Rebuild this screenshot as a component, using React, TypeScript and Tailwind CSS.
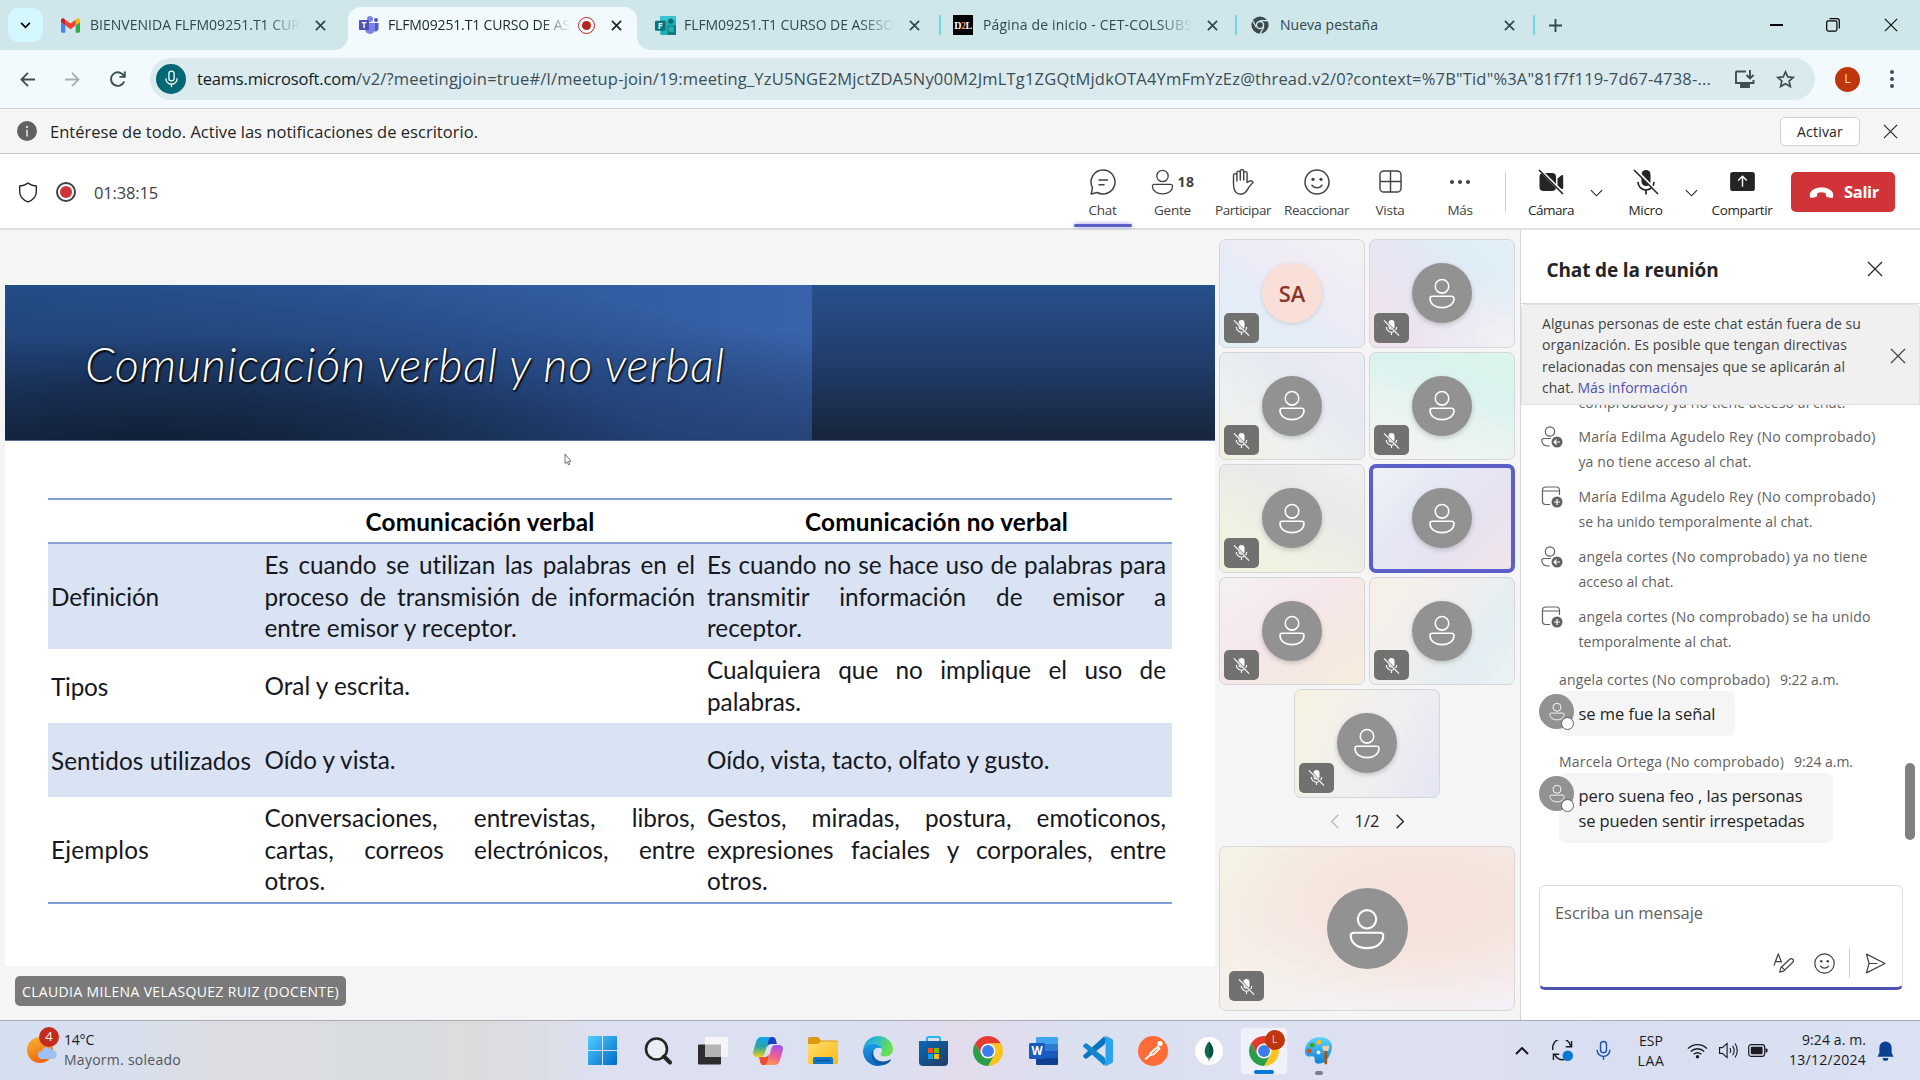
import React, { useLayoutEffect, useRef } from 'react';

/* Text run whose tracking is adjusted so that it fills a known width. */
function Fit({ w, className = '', children }: { w: number; className?: string; children: string }) {
  const ref = useRef<HTMLSpanElement>(null);
  useLayoutEffect(() => {
    const el = ref.current;
    if (!el) return;
    el.style.letterSpacing = '0px';
    const natural = el.getBoundingClientRect().width;
    el.style.letterSpacing = `${(w - natural) / children.length}px`;
  }, [w, children]);
  return (
    <span ref={ref} className={'inline-block w-fit shrink-0 whitespace-pre ' + className}>
      {children}
    </span>
  );
}

type P = { className?: string };

const X = ({ className = '' }: P) => (
  <svg viewBox="0 0 16 16" className={className} fill="none" stroke="currentColor" strokeWidth="1.2">
    <path d="M1 1 15 15M15 1 1 15" />
  </svg>
);

const Person = ({ className = '' }: P) => (
  <svg viewBox="0 0 28 32" className={className} fill="none" stroke="currentColor" strokeWidth="1.6">
    <circle cx="14" cy="8.6" r="7" />
    <path d="M4 18.8h20a2.4 2.4 0 0 1 2.4 2.4c0 5.4-5.2 9.4-12.4 9.4S1.6 26.6 1.6 21.2A2.4 2.4 0 0 1 4 18.8z" />
  </svg>
);

const Chrome = ({ className = '' }: P) => (
  <svg viewBox="0 0 48 48" className={className}>
    <circle cx="24" cy="24" r="12" fill="#fff" />
    <path fill="#e33b2e" d="M24 12h20.780A24 24 0 0 0 3.220 12.003L13.610 30A11.985 11.985 0 0 1 24 12z" />
    <path fill="#fcc31e" d="M34.390 30.003 24 48A24 24 0 0 0 44.780 12H24A11.985 11.985 0 0 1 34.390 30.003z" />
    <path fill="#2a9d48" d="M13.610 30.003 3.220 12.006A24 24 0 0 0 24.003 48L34.390 30.003A11.985 11.985 0 0 1 13.610 30.003z" />
    <circle cx="24" cy="24" r="9.5" fill="#3b7ded" />
  </svg>
);

const ChromeMono = ({ className = '' }: P) => (
  <svg viewBox="0 0 48 48" className={className}>
    <circle cx="24" cy="24" r="23" fill="#3c4a4e" />
    <circle cx="24" cy="24" r="11.5" fill="#cfe7eb" />
    <circle cx="24" cy="24" r="7.5" fill="#3c4a4e" />
    <path d="M24 12.500H45M14 30 4 12M34 30 24 48" stroke="#cfe7eb" strokeWidth="3.5" fill="none" />
  </svg>
);

const Gmail = () => (
  <svg viewBox="52 42 88 66" className="h-[15px] w-[19px]">
    <path fill="#4285f4" d="M58 108h14V74L52 59v43c0 3.320 2.690 6 6 6" />
    <path fill="#34a853" d="M120 108h14c3.320 0 6-2.690 6-6V59l-20 15" />
    <path fill="#fbbc04" d="M120 48v26l20-15v-8c0-7.420-8.470-11.650-14.400-7.200" />
    <path fill="#ea4335" d="M72 74V48l24 18 24-18v26L96 92" />
    <path fill="#c5221f" d="M52 51v8l20 15V48l-5.600-4.200c-5.940-4.450-14.400-.220-14.400 7.200" />
  </svg>
);

const TeamsLogo = () => (
  <svg viewBox="0 0 20 18" className="h-[18px] w-[20px]">
    <circle cx="17" cy="4" r="2" fill="#5059c9" />
    <circle cx="11" cy="3" r="3" fill="#7b83eb" />
    <path fill="#5059c9" d="M14 7h5.500v6a3 3 0 0 1-4.500 2z" />
    <path fill="#7b83eb" d="M6 7h10v6a5 5 0 0 1-10 0z" />
    <rect y="4" width="10" height="10" rx="1" fill="#4b53bc" />
    <text x="5" y="12" textAnchor="middle" fontSize="8.5" fontWeight="700" fontFamily="Open Sans" fill="#fff">T</text>
  </svg>
);

const FormsLogo = () => (
  <svg viewBox="0 0 20 18" className="h-[19px] w-[21px]">
    <rect x="5" width="15" height="18" rx="1" fill="#1fb0b4" />
    <rect x="12" y="9" width="8" height="9" fill="#0b7b80" />
    <rect x="5" width="15" height="4" fill="#37c6d0" />
    <circle cx="15" cy="4.8" r="2.5" fill="#0b6a70" />
    <rect x="13" y="10" width="5" height="5" fill="#2ba9ae" />
    <rect y="4.5" width="10" height="9.5" rx="1" fill="#02767a" />
    <text x="5" y="12.3" textAnchor="middle" fontSize="8.5" fontWeight="700" fontFamily="Open Sans" fill="#fff">F</text>
  </svg>
);

const Mic = ({ className = '' }: P) => (
  <svg viewBox="0 0 20 24" className={className} fill="none" stroke="currentColor" strokeWidth="1.7">
    <rect x="6.5" y="1.5" width="7" height="13" rx="3.5" />
    <path d="M2.500 11v.500a7.500 7.500 0 0 0 15 0V11M10 19v4" />
  </svg>
);

const MicOff = ({ className = '' }: P) => (
  <svg viewBox="0 0 18 18" className={className} fill="none" stroke="currentColor">
    <rect x="5.8" y="1" width="6.4" height="10.5" rx="3.2" fill="currentColor" stroke="none" />
    <path d="M3.500 8.500a5.500 5.500 0 0 0 11 0M9 14v3" strokeWidth="1.2" />
    <path d="m1.400 1.600 15.600 15.600" strokeWidth="2.2" className="stroke-[#767676]" />
    <path d="m1 1.500 16 16" strokeWidth="1.2" />
  </svg>
);

function TabClose({ className = '' }: P) {
  return (
    <svg viewBox="0 0 12 12" className={'size-[11px] shrink-0 ' + className} fill="none" stroke="currentColor" strokeWidth="1.9">
      <path d="M1 1 11 11M11 1 1 11" />
    </svg>
  );
}

function TabTitle({ w, fade = true, children }: { w: number; fade?: boolean; children: string }) {
  return (
    <span
      className={
        'ml-[10px] overflow-hidden text-[14px] leading-5 ' +
        (fade ? '[mask-image:linear-gradient(to_right,#000_84%,transparent)]' : '')
      }
    >
      <Fit w={w}>{children}</Fit>
    </span>
  );
}

function TabStrip() {
  return (
    <div className="flex h-[50px] items-stretch bg-[#cfe7eb] text-[#33484d]">
      <div className="ml-[8px] mt-[8px] flex h-[34px] w-[35px] items-center justify-center rounded-[11px] bg-[#d3f8ff]">
        <svg viewBox="0 0 12 8" className="h-[7px] w-[11px] text-black" fill="none" stroke="currentColor" strokeWidth="2">
          <path d="m1 1 5 5 5-5" />
        </svg>
      </div>
      <div className="flex w-[305px] items-center pl-[18px] pr-[22px]">
        <Gmail />
        <TabTitle w={210}>BIENVENIDA FLFM09251.T1 CUR</TabTitle>
        <TabClose className="ml-auto" />
      </div>
      <div className="relative mt-[7px] flex w-[289px] items-center rounded-t-[13px] bg-[#f3fafd] pb-[7px] pl-[11px] pr-[15px] text-[#15292e]">
        <span className="absolute -left-[13px] bottom-0 size-[13px] bg-[radial-gradient(circle_at_0_0,transparent_12.5px,#f3fafd_13px)]" />
        <span className="absolute -right-[13px] bottom-0 size-[13px] bg-[radial-gradient(circle_at_100%_0,transparent_12.5px,#f3fafd_13px)]" />
        <TeamsLogo />
        <span className="-ml-px flex">
          <TabTitle w={182}>FLFM09251.T1 CURSO DE AS</TabTitle>
        </span>
        <span className="ml-auto flex size-[17px] items-center justify-center rounded-full border-[1.5px] border-[#b3261e]">
          <span className="size-[9px] rounded-full bg-[#b3261e]" />
        </span>
        <TabClose className="ml-[16px]" />
      </div>
      <div className="flex w-[302px] items-center pl-[18px] pr-[19px]">
        <FormsLogo />
        <span className="-ml-[2px] flex">
          <TabTitle w={210}>FLFM09251.T1 CURSO DE ASESO</TabTitle>
        </span>
        <TabClose className="ml-auto" />
      </div>
      <div className="my-auto h-5 w-[2px] rounded bg-[#70d6e6]" />
      <div className="flex w-[294px] items-center pl-[12px] pr-[17px]">
        <span className="flex h-[20px] w-[20px] items-center justify-center bg-black font-[Liberation_Serif] text-[10px] font-bold tracking-[-0.5px] text-white">
          D<span className="text-[#ff8c5a]">2</span>L
        </span>
        <TabTitle w={209}>Página de inicio - CET-COLSUBS</TabTitle>
        <TabClose className="ml-auto" />
      </div>
      <div className="my-auto h-5 w-[2px] rounded bg-[#70d6e6]" />
      <div className="flex w-[296px] items-center pl-[14px] pr-[18px]">
        <ChromeMono className="size-[18px]" />
        <span className="ml-px flex">
          <TabTitle w={98} fade={false}>Nueva pestaña</TabTitle>
        </span>
        <TabClose className="ml-auto" />
      </div>
      <div className="my-auto h-5 w-[2px] rounded bg-[#70d6e6]" />
      <svg viewBox="0 0 14 14" className="my-auto ml-[14px] size-[13px]" fill="none" stroke="currentColor" strokeWidth="2">
        <path d="M7 0v14M0 7h14" />
      </svg>
      <div className="ml-auto flex items-center pr-[22px] text-black">
        <span className="h-[1.5px] w-[13px] bg-black" />
        <svg viewBox="0 0 14 14" className="ml-[43px] size-[14px]" fill="none" stroke="currentColor" strokeWidth="1.2">
          <rect x=".7" y="2.9" width="10.2" height="10.2" rx="1.5" />
          <path d="M3.500.700H11a2.300 2.300 0 0 1 2.300 2.300v7.500" />
        </svg>
        <X className="ml-[44px] size-[14px]" />
      </div>
    </div>
  );
}

function AddressBar() {
  return (
    <div className="flex h-[59px] items-center border-b border-[#c9cfd1] bg-[#f3fafd] text-[#3c4f54]">
      <svg viewBox="0 0 16 16" className="ml-[20px] size-[15px]" fill="none" stroke="currentColor" strokeWidth="1.9">
        <path d="M16 8H2M8.500 1 1.500 8l7 7" />
      </svg>
      <svg viewBox="0 0 16 16" className="ml-[30px] size-[15px] text-[#a5b1b4]" fill="none" stroke="currentColor" strokeWidth="1.9">
        <path d="M0 8h14M7.500 1l7 7-7 7" />
      </svg>
      <svg viewBox="0 0 16 16" className="ml-[30px] size-[16px]" fill="none" stroke="currentColor" strokeWidth="1.9">
        <path d="M14.200 10.500A6.800 6.800 0 1 1 14 5.200M14.800.500v5.400H9.400" />
      </svg>
      <div className="ml-[24px] flex h-[42px] w-[1665px] items-center rounded-full bg-[#dbeaef]">
        <span className="ml-[6px] flex size-[30px] items-center justify-center rounded-full bg-[#006874] text-white">
          <Mic className="h-[18px] w-[15px]" />
        </span>
        <span className="ml-[11px] pt-px text-[16.5px]">
          <Fit w={159} className="text-[#0d1e22]">teams.microsoft.com</Fit>
          <Fit w={1355}>{'/v2/?meetingjoin=true#/l/meetup-join/19:meeting_YzU5NGE2MjctZDA5Ny00M2JmLTg1ZGQtMjdkOTA4YmFmYzEz@thread.v2/0?context=%7B"Tid"%3A"81f7f119-7d67-4738-...'}</Fit>
        </span>
        <svg viewBox="0 0 20 18" className="ml-auto h-[18px] w-[20px]" fill="none" stroke="currentColor" strokeWidth="1.9">
          <path d="M11 1.500H2a1 1 0 0 0-1 1V13h17.500v-3M15 0v8M11.500 5 15 8.500 18.500 5M6 15.800h8" />
          <path d="M6 14h8v3H6z" fill="currentColor" />
        </svg>
        <svg viewBox="0 0 20 20" className="ml-[21px] mr-[20px] size-[19px]" fill="none" stroke="currentColor" strokeWidth="1.8">
          <path d="m10 2 2.400 5.300 5.700.600-4.300 3.800 1.300 5.700L10 14.400l-5.100 3 1.300-5.700L1.900 7.900l5.700-.600z" />
        </svg>
      </div>
      <span className="ml-[20px] flex size-[25px] items-center justify-center rounded-full bg-[#bf360c] text-[12.5px] text-[#f3d5ca]">L</span>
      <div className="ml-[30px] flex flex-col gap-[3px]">
        <i className="size-[4px] rounded-full bg-current" />
        <i className="size-[4px] rounded-full bg-current" />
        <i className="size-[4px] rounded-full bg-current" />
      </div>
    </div>
  );
}

function NotifyBar() {
  return (
    <div className="flex h-[45px] items-center border-b border-[#cdcdcd] bg-[#f5f5f5] text-[#242424]">
      <span className="ml-[17px] flex size-[20px] items-center justify-center rounded-full bg-[#616161]">
        <svg viewBox="0 0 4 12" className="h-[11px] w-[4px]" fill="#fff">
          <circle cx="2" cy="1.2" r="1.1" />
          <rect x="1.3" y="4" width="1.4" height="7.5" />
        </svg>
      </span>
      <Fit w={428} className="ml-[13px] pt-[3px] text-[16.5px]">Entérese de todo. Active las notificaciones de escritorio.</Fit>
      <div className="ml-auto flex h-[29px] w-[80px] items-center justify-center rounded-[5px] border border-[#d1d1d1] bg-white pt-px text-[14px]">
        <Fit w={46}>Activar</Fit>
      </div>
      <X className="ml-[23px] mr-[22px] size-[15px]" />
    </div>
  );
}

function Tool({ className, label, w, children, on = false }: { className: string; label: string; w: number; children: React.ReactNode; on?: boolean }) {
  return (
    <div className={'relative flex h-[75px] flex-col items-center pt-[13px] ' + className}>
      <div className="flex h-[28px] items-center justify-center">{children}</div>
      <Fit w={w} className="mt-[4px] text-[13.5px] leading-5">{label}</Fit>
      {on && <span className="absolute bottom-[3px] h-[3px] w-[58px] rounded-full bg-[#5b5fc7] shadow-[0_0_4px_#8a8de0]" />}
    </div>
  );
}

const Smile = ({ className = '' }: P) => (
  <svg viewBox="0 0 26 26" className={className} fill="none" stroke="currentColor" strokeWidth="1.5">
    <circle cx="13" cy="13" r="12" />
    <path d="M8 16.200a6.200 6.200 0 0 0 10 0" strokeLinecap="round" />
    <circle cx="9" cy="10.3" r="1.6" fill="currentColor" stroke="none" />
    <circle cx="17" cy="10.3" r="1.6" fill="currentColor" stroke="none" />
  </svg>
);

const Chevron = ({ className = '' }: P) => (
  <svg viewBox="0 0 14 8" className={className} fill="none" stroke="currentColor" strokeWidth="1.2">
    <path d="m1 1 6 6 6-6" />
  </svg>
);

function MeetingBar() {
  return (
    <div className="flex h-[76px] items-center border-b-2 border-[#e0e0e0] bg-white pt-[2px] text-[#424242]">
      <svg viewBox="0 0 20 22" className="ml-[18px] h-[21px] w-[20px] text-[#242424]" fill="none" stroke="currentColor" strokeWidth="1.4">
        <path d="M10 1.200C12.500 3 15.500 4 18.700 4.200V10c0 5-3 8.800-8.700 10.800C4.300 18.800 1.300 15 1.300 10V4.200C4.500 4 7.500 3 10 1.200z" />
      </svg>
      <span className="ml-[18px] flex size-[20px] items-center justify-center rounded-full border-2 border-[#424242]">
        <span className="size-[12px] rounded-full bg-[#d13438]" />
      </span>
      <Fit w={64} className="ml-[18px] pt-[2px] text-[16.5px]">01:38:15</Fit>
      <div className="ml-auto flex">
        <Tool className="w-[69px]" label="Chat" w={28} on>
          <svg viewBox="0 0 26 26" className="size-[26px]" fill="none" stroke="currentColor" strokeWidth="1.5" strokeLinecap="round">
            <path d="M13 1a12 12 0 1 1-5.800 22.500L1.200 25l1.300-6.300A12 12 0 0 1 13 1zM9 11h8.500M9 15.700h5" strokeLinejoin="round" />
          </svg>
        </Tool>
        <Tool className="w-[71px]" label="Gente" w={37}>
          <Person className="h-[26px] w-[23px]" />
          <Fit w={17} className="ml-[4px] text-[14px] font-bold">18</Fit>
        </Tool>
        <Tool className="w-[70px]" label="Participar" w={56}>
          <svg viewBox="0 0 22 26" className="h-[26px] w-[22px]" fill="none" stroke="currentColor" strokeWidth="1.4" strokeLinejoin="round" strokeLinecap="round">
            <path d="M1.500 15V6.300a1.700 1.700 0 0 1 3.400 0V12 3.800a1.700 1.700 0 0 1 3.400 0V11 2.300a1.700 1.700 0 0 1 3.400 0V11 4.300a1.700 1.700 0 0 1 3.400 0v9.200l2.300-1.300c1.400-.700 2.900-.100 3.600 1.200l-4.200 5c-1.800 3.600-3.600 6.800-8 6.800-4.600 0-7.300-3.600-7.300-10.200z" />
          </svg>
        </Tool>
        <Tool className="w-[77px]" label="Reaccionar" w={65}>
          <Smile className="size-[26px]" />
        </Tool>
        <Tool className="w-[70px]" label="Vista" w={29}>
          <svg viewBox="0 0 24 24" className="size-[23px]" fill="none" stroke="currentColor" strokeWidth="1.5">
            <rect x="1" y="1" width="22" height="22" rx="4" />
            <path d="M12 1v22M1 12h22" />
          </svg>
        </Tool>
        <Tool className="w-[70px]" label="Más" w={25}>
          <span className="flex gap-[4px]">
            <i className="size-[4px] rounded-full bg-current" />
            <i className="size-[4px] rounded-full bg-current" />
            <i className="size-[4px] rounded-full bg-current" />
          </span>
        </Tool>
      </div>
      <div className="ml-[10px] h-[40px] w-px bg-[#d1d1d1]" />
      <div className="ml-[6px] flex text-[#242424]">
        <Tool className="w-[78px]" label="Cámara" w={46}>
          <svg viewBox="0 0 26 26" className="size-[26px]" fill="currentColor">
            <path d="M5.500 4H14a4 4 0 0 1 4 4v10a4 4 0 0 1-4 4H5.500a4 4 0 0 1-4-4V8a4 4 0 0 1 4-4zM19.500 9.500l4-3.200c.700-.500 1.700 0 1.700.800v12c0 .800-1 1.300-1.700.800l-4-3.200z" />
            <path d="m1 0 25 25" stroke="#fff" strokeWidth="3" />
            <path d="m1 1 24 24" stroke="currentColor" strokeWidth="1.6" />
          </svg>
        </Tool>
        <Chevron className="mt-[34px] h-[8px] w-[13px]" />
        <Tool className="w-[85px]" label="Micro" w={34}>
          <svg viewBox="0 0 26 26" className="size-[26px]" fill="none" stroke="currentColor" strokeWidth="1.7">
            <rect x="8.5" y="1" width="9" height="16" rx="4.5" fill="currentColor" stroke="none" />
            <path d="M5 13a8 8 0 0 0 16 0M13 21v4.500" />
            <path d="m2 0 24 25" stroke="#fff" strokeWidth="2.6" />
            <path d="m1 1 24 24" stroke="currentColor" strokeWidth="1.6" />
          </svg>
        </Tool>
        <Chevron className="-ml-[3px] mt-[34px] h-[8px] w-[13px]" />
        <Tool className="w-[88px]" label="Compartir" w={61}>
          <svg viewBox="0 0 26 20" className="h-[19px] w-[25px]" fill="currentColor">
            <rect width="26" height="20" rx="3" />
            <path d="M13 15.500V5M8.500 9 13 4.500 17.500 9" stroke="#fff" strokeWidth="1.5" fill="none" />
          </svg>
        </Tool>
      </div>
      <div className="ml-[5px] mr-[25px] flex h-[40px] w-[104px] items-center rounded-[5px] bg-[#d13438] text-white">
        <svg viewBox="0 0 26 12" className="ml-[18px] h-[11px] w-[25px]" fill="currentColor">
          <path d="M13 .500c5.500 0 10 2 12 5.300.900 1.600 1 3.400.600 5-.200.900-1 1.300-1.800 1.100l-4.600-1.100c-.800-.200-1.300-.900-1.400-1.600l-.300-2.700a13 13 0 0 0-9 0L8.200 9.200c-.100.700-.600 1.400-1.400 1.600L2.200 11.900C1.400 12.100.600 11.700.400 10.800c-.400-1.600-.300-3.400.600-5C3 2.500 7.500.500 13 .500z" />
        </svg>
        <Fit w={35} className="ml-[10px] pt-px text-[16.5px] font-bold">Salir</Fit>
      </div>
    </div>
  );
}

function Lines({ lines }: { lines: string[] }) {
  return (
    <div className="pt-px">
      {lines.map((l, i) => (
        <div key={l} className={'h-[31.7px] whitespace-nowrap ' + (i === lines.length - 1 ? '' : '[text-align-last:justify]')}>
          {l}
        </div>
      ))}
    </div>
  );
}

function Row({ className, label, w, a, b }: { className: string; label: string; w: number; a: string[]; b: string[] }) {
  return (
    <div className={'grid grid-cols-[213.5px_430.5px_12px_459px] items-center pl-[3px] ' + className}>
      <Fit w={w} className="pt-[2px]">{label}</Fit>
      <Lines lines={a} />
      <span />
      <Lines lines={b} />
    </div>
  );
}

function Slide() {
  return (
    <div className="relative ml-[5px] mt-[55px] h-[681px] w-[1210px] bg-white font-[Lato] text-[24.3px] leading-[31.7px] text-[#15181e] [font-variant-ligatures:none]">
      <div className="flex h-[156px] border-b border-[#5d6f92]">
        <div className="flex w-[807px] items-center bg-[radial-gradient(ellipse_100%_125%_at_18%_112%,#0d1a2e,#172c4ee0_38%,#1e3c7080_65%,transparent),linear-gradient(180deg,transparent_30%,#1f355c99),linear-gradient(90deg,#234f8a,#3862aa)] pl-[80px]">
          <Fit w={640} className="pt-[3px] text-[47px] font-light italic leading-[60px] text-white [text-shadow:0_0_2px_#000,1px_2px_2px_#000]">
            Comunicación verbal y no verbal
          </Fit>
        </div>
        <div className="flex-1 bg-[linear-gradient(180deg,#27508c,#213d6b_50%,#17233a)]" />
      </div>
      <div className="ml-[43px] mt-[57px] w-[1124px] border-y-[2px] border-[#7f9fd4]">
        <div className="grid h-[43.5px] grid-cols-[216px_431px_471px] items-center border-b-[2.5px] border-[#86a3d6] pt-[2px] font-bold text-black">
          <span />
          <div className="pl-px text-center"><Fit w={229}>Comunicación verbal</Fit></div>
          <div className="pl-[12px] text-center"><Fit w={263}>Comunicación no verbal</Fit></div>
        </div>
        <Row
          className="h-[105px] bg-[#dae3f3]"
          label="Definición"
          w={108}
          a={['Es cuando se utilizan las palabras en el', 'proceso de transmisión de información', 'entre emisor y receptor.']}
          b={['Es cuando no se hace uso de palabras para', 'transmitir información de emisor a', 'receptor.']}
        />
        <Row className="h-[74px]" label="Tipos" w={57} a={['Oral y escrita.']} b={['Cualquiera que no implique el uso de', 'palabras.']} />
        <Row className="h-[74px] bg-[#dae3f3]" label="Sentidos utilizados" w={200} a={['Oído y vista.']} b={['Oído, vista, tacto, olfato y gusto.']} />
        <Row
          className="h-[105px]"
          label="Ejemplos"
          w={98}
          a={['Conversaciones, entrevistas, libros,', 'cartas, correos electrónicos, entre', 'otros.']}
          b={['Gestos, miradas, postura, emoticonos,', 'expresiones faciales y corporales, entre', 'otros.']}
        />
      </div>
      <svg viewBox="0 0 8 13" className="absolute left-[559px] top-[168px] h-[13px] w-[8px]" fill="#fff" stroke="#666" strokeWidth=".9">
        <path d="M1 1v9.500l2-1.800 1.500 3.300 1.300-.600L4.500 8.300H7z" />
      </svg>
    </div>
  );
}

function MuteBadge({ className = '' }: P) {
  return (
    <span className={'absolute flex h-[30px] w-[35px] items-center justify-center rounded-[5px] bg-[#71716f] text-white ' + className}>
      <MicOff className="size-[17px]" />
    </span>
  );
}

function Tile({ bg, initials, active = false }: { bg: string; initials?: string; active?: boolean }) {
  return (
    <div
      className={
        'relative flex h-[108.5px] w-[146px] items-center justify-center rounded-[7px] ' +
        (active ? 'border-4 border-[#5b5fc7] ' : 'border border-[#d5d6d9] ') + bg
      }
    >
      {initials ? (
        <span className="flex size-[60px] items-center justify-center rounded-full bg-[#fadfd9] text-[22px] font-semibold text-[#8a3626] shadow-[0_1px_4px_#0002]">{initials}</span>
      ) : (
        <span className="flex size-[60px] items-center justify-center rounded-full bg-[#929292] text-white shadow-[0_2px_5px_#0003]">
          <Person className="h-[31px] w-[28px]" />
        </span>
      )}
      {!active && <MuteBadge className="bottom-[4px] left-[4px]" />}
    </div>
  );
}

function Gallery() {
  return (
    <div className="flex w-[306px] flex-col items-start border-r border-[#d6d6d6] pl-[4px] pt-[9px]">
      <div className="flex w-[296px] flex-wrap justify-center gap-x-[4px] gap-y-[4px]">
        <Tile initials="SA" bg="bg-[linear-gradient(35deg,#dff0f6,#e6ecf7_40%,#efebf5_65%,#f3f1f5)]" />
        <Tile bg="bg-[radial-gradient(ellipse_at_100%_100%,#f3f1f4,transparent_50%),linear-gradient(45deg,#f3e1ec,#e8e5f2_40%,#deedf6_75%,#e3f0f6)]" />
        <Tile bg="bg-[linear-gradient(35deg,#f5efdf,#edf1f0_30%,#e6e9f1_65%,#ecebf4)]" />
        <Tile bg="bg-[linear-gradient(200deg,#dbf5ea,#dbf2ef_35%,#e8f4f0_60%,#f4f3f4)]" />
        <Tile bg="bg-[linear-gradient(30deg,#f2f4de,#eff0e4_35%,#e9e9e8_65%,#f0f0f3)]" />
        <Tile active bg="bg-[linear-gradient(135deg,#eff1f7,#e5e9f4_35%,#e7e2f0_65%,#f1e5ec)]" />
        <Tile bg="bg-[linear-gradient(140deg,#f4f0f4,#f5e7e9_45%,#f5e9e1_75%,#f6eddd)]" />
        <Tile bg="bg-[linear-gradient(125deg,#f6f1e6,#f1eeee_40%,#e3eef2_75%,#ebf3f4)]" />
        <Tile bg="bg-[linear-gradient(115deg,#f5f2e0,#f3f0ea_30%,#f0eff1_60%,#e3e5f4)]" />
      </div>
      <div className="flex h-[48.5px] w-[296px] items-center justify-center text-[#242424]">
        <Chevron className="h-[9px] w-[16px] rotate-90 text-[#bdbdbd]" />
        <Fit w={25} className="mx-[12px] text-[16.5px]">1/2</Fit>
        <Chevron className="h-[9px] w-[16px] -rotate-90" />
      </div>
      <div className="relative flex h-[165px] w-[296px] items-center justify-center rounded-[7px] border border-[#ddd6d4] bg-[radial-gradient(ellipse_at_70%_35%,#f6e0da,#f5e5df_35%,transparent_75%),linear-gradient(150deg,#f4f3e6,#f5efe7_35%,#f4f2f2_70%,#f5f0f9)]">
        <span className="flex size-[81px] items-center justify-center rounded-full bg-[#929292] text-white">
          <Person className="h-[42px] w-[38px]" />
        </span>
        <MuteBadge className="bottom-[9px] left-[9px]" />
      </div>
    </div>
  );
}

function EventIcon({ kind }: { kind: 'left' | 'joined' }) {
  return (
    <svg viewBox="0 0 22 22" className="mt-[2px] size-[22px] shrink-0" fill="none" stroke="#616161" strokeWidth="1.2">
      {kind === 'left' ? (
        <>
          <circle cx="9" cy="5.5" r="4.7" />
          <path d="M10 12.500H3A2.200 2.200 0 0 0 .800 14.700c0 3.300 3.200 5.300 7.700 5.500" />
        </>
      ) : (
        <path d="M18.500 9V4a3 3 0 0 0-3-3h-11a3 3 0 0 0-3 3v11.500a3 3 0 0 0 3 3H9M1.500 5h17" />
      )}
      <circle cx="16" cy="16" r="5.5" fill="#616161" stroke="none" />
      <path d={kind === 'left' ? 'M19 16h-6M15.500 13.500 13 16l2.500 2.500' : 'M16 13v6M13 16h6'} stroke="#fff" />
    </svg>
  );
}

function ChatEvent({ kind, a, b, wa, wb }: { kind: 'left' | 'joined'; a: string; b: string; wa: number; wb: number }) {
  return (
    <div className="flex h-[50px] w-full pl-[20px]">
      <EventIcon kind={kind} />
      <div className="ml-[15.5px] flex flex-col items-start text-[14px] leading-[25px] text-[#616161]">
        <Fit w={wa}>{a}</Fit>
        <Fit w={wb}>{b}</Fit>
      </div>
    </div>
  );
}

function Message({ name, wn, time, lines, bubble }: { name: string; wn: number; time: string; lines: [string, number][]; bubble: string }) {
  return (
    <div className="pl-[38px]">
      <div className="flex h-[22px] items-center pb-[2px] text-[14px] text-[#616161]">
        <Fit w={wn}>{name}</Fit>
        <Fit w={59} className="ml-[10px]">{time}</Fit>
      </div>
      <div className={'relative flex flex-col items-start justify-center rounded-[7px] bg-[#f5f5f5] pl-[19.5px] text-[16.5px] leading-[25px] text-[#242424] ' + bubble}>
        {lines.map(([t, w]) => (
          <Fit key={t} w={w}>{t}</Fit>
        ))}
        <span className="absolute -left-[20px] top-[3px] flex size-[35px] items-center justify-center rounded-full bg-[#929292] text-white">
          <Person className="h-[19px] w-[16px]" />
          <span className="absolute -bottom-px right-0 size-[13px] rounded-full border-[1.5px] border-[#616161] bg-white" />
        </span>
      </div>
    </div>
  );
}

function ChatPanel() {
  return (
    <div className="relative flex w-[399px] flex-col bg-white text-[#424242]">
      <div className="flex h-[74px] items-center border-b border-[#d9d9d9] pl-[25.5px] pr-[37px] text-[#242424]">
        <Fit w={172} className="pt-[8px] text-[19px] font-bold">Chat de la reunión</Fit>
        <X className="ml-auto mt-[5px] size-[16px]" />
      </div>
      <div className="z-10 flex h-[101px] items-center rounded-t-[5px] border border-[#e0e0e0] bg-[#f0f0f0] pl-[20px] pr-[13px] pt-[2px]">
        <div className="flex flex-col items-start text-[14px] leading-[21.25px]">
          <Fit w={319}>Algunas personas de este chat están fuera de su</Fit>
          <Fit w={305}>organización. Es posible que tengan directivas</Fit>
          <Fit w={303}>relacionadas con mensajes que se aplicarán al</Fit>
          <div>
            <Fit w={35.5}>chat. </Fit>
            <Fit w={110} className="text-[#4f52b2]">Más información</Fit>
          </div>
        </div>
        <X className="ml-auto size-[16px]" />
      </div>
      <div className="-mt-[15px] h-[25px] pl-[57.5px] text-[14px] leading-[25px] text-[#616161]">
        <Fit w={267}>comprobado) ya no tiene acceso al chat.</Fit>
      </div>
      <div className="mt-[9px] flex flex-col gap-[10px]">
        <ChatEvent kind="left" a="María Edilma Agudelo Rey (No comprobado)" wa={297} b="ya no tiene acceso al chat." wb={173} />
        <ChatEvent kind="joined" a="María Edilma Agudelo Rey (No comprobado)" wa={297} b="se ha unido temporalmente al chat." wb={234} />
        <ChatEvent kind="left" a="angela cortes (No comprobado) ya no tiene" wa={289} b="acceso al chat." wb={95} />
        <ChatEvent kind="joined" a="angela cortes (No comprobado) se ha unido" wa={292} b="temporalmente al chat." wb={153} />
      </div>
      <div className="mt-[15px] flex flex-col gap-[15px]">
        <Message name="angela cortes (No comprobado)" wn={211} time="9:22 a.m." lines={[['se me fue la señal', 137]]} bubble="h-[45px] w-[176px]" />
        <Message
          name="Marcela Ortega (No comprobado)"
          wn={225}
          time="9:24 a.m."
          lines={[['pero suena feo , las personas', 224], ['se pueden sentir irrespetadas', 226]]}
          bubble="h-[70px] w-[274px]"
        />
      </div>
      <div className="absolute right-[5px] top-[533px] h-[77px] w-[10px] rounded-full bg-[#808080]" />
      <div className="mt-auto mb-[30px] ml-[18px] flex h-[105px] w-[364px] flex-col justify-between overflow-hidden rounded-[6px] border border-b-[3px] border-[#dcdcdc] border-b-[#4f52b2] pb-[9px] pl-[15px] pr-[16px] pt-[14px]">
        <Fit w={148} className="text-[16.5px] leading-[26px] text-[#616161]">Escriba un mensaje</Fit>
        <div className="flex items-center justify-end">
          <svg viewBox="0 0 22 22" className="size-[21px]" fill="none" stroke="currentColor" strokeWidth="1.3" strokeLinejoin="round">
            <path d="m1 13 4.500-12L9 10M2.500 9h6" />
            <path d="m7 20 1.200-4.500 9.300-9a2.200 2.200 0 0 1 3.200 3.200l-9.300 9zM9 14.500l3.500 3.500" />
          </svg>
          <Smile className="ml-[20px] size-[21px]" />
          <span className="ml-[14px] h-[30px] w-px bg-[#d1d1d1]" />
          <svg viewBox="0 0 22 22" className="ml-[15px] size-[21px]" fill="none" stroke="currentColor" strokeWidth="1.3" strokeLinejoin="round">
            <path d="M1.500 1.200 21 11 1.500 20.800 4.300 11zM4.300 11H13" />
          </svg>
        </div>
      </div>
    </div>
  );
}

const Cell = ({ children, className = '' }: { children: React.ReactNode; className?: string }) => (
  <div className={'relative flex h-[48px] w-[55.1px] items-center justify-center ' + className}>{children}</div>
);

function TaskIcons() {
  return (
    <div className="flex items-center">
      <Cell>
        <svg viewBox="0 0 29 29" className="size-[29px]">
          <defs>
            <linearGradient id="win" x1="0" y1="0" x2="1" y2="1"><stop stopColor="#4fd0ff" /><stop offset="1" stopColor="#0067c8" /></linearGradient>
          </defs>
          <path fill="url(#win)" d="M0 1a1 1 0 0 1 1-1h13v14H0zM15 0h13a1 1 0 0 1 1 1v13H15zM0 15h14v14H1a1 1 0 0 1-1-1zM15 15h14v13a1 1 0 0 1-1 1H15z" />
        </svg>
      </Cell>
      <Cell>
        <svg viewBox="0 0 28 28" className="size-[28px]" fill="none" stroke="#262626" strokeLinecap="round">
          <circle cx="12.5" cy="12" r="10.5" strokeWidth="2.6" fill="#eceef5" />
          <path d="m20 19.500 6 6" strokeWidth="4" />
        </svg>
      </Cell>
      <Cell>
        <svg viewBox="0 0 30 28" className="h-[28px] w-[30px]">
          <rect y="7.500" width="23" height="20" rx="1" fill="#2d2d2d" />
          <rect x="7" width="23" height="20" rx="1" fill="#f5f5f5" />
          <path d="M7 7.500h16V20H8a1 1 0 0 1-1-1z" fill="#b4b4b4" />
        </svg>
      </Cell>
      <Cell>
        <svg viewBox="0 0 30 28" className="h-[28px] w-[30px]">
          <defs>
            <linearGradient id="cpa" x1="0" y1="0" x2="0" y2="1"><stop stopColor="#12a5f4" /><stop offset=".5" stopColor="#2ba5a0" /><stop offset="1" stopColor="#f2d316" /></linearGradient>
            <linearGradient id="cpb" x1=".6" y1="0" x2=".3" y2="1"><stop stopColor="#a153ea" /><stop offset=".5" stopColor="#ef5b9c" /><stop offset="1" stopColor="#fd9a52" /></linearGradient>
          </defs>
          <path d="M14 0h5.500c1.800 0 2.700 1 3.200 2.600L24 7h-6c-2 0-3 1-3.600 3z" fill="#1b3fc4" />
          <path d="M16 28h-5.500c-1.800 0-2.600-1-3.200-2.600L6 20h6c2 0 3-1 3.600-3z" fill="#ee4d2e" />
          <path d="M8.500 0H19c-2 .200-2.800 1.500-3.400 3.500l-4 13C11 18.500 10 20 7.500 20H4c-3.500 0-4.600-2.500-3.600-6L3 5C4 1.800 5.500 0 8.500 0z" fill="url(#cpa)" />
          <path d="M21.500 28H11c2-.200 2.800-1.500 3.400-3.500l4-13C19 9.500 20 8 22.500 8H26c3.500 0 4.600 2.500 3.600 6L27 23c-1 3.200-2.500 5-5.500 5z" fill="url(#cpb)" />
        </svg>
      </Cell>
      <Cell>
        <svg viewBox="0 0 30 27" className="h-[27px] w-[30px]">
          <defs>
            <linearGradient id="fd" x1="0" y1="0" x2="1" y2="1"><stop stopColor="#ffdf6e" /><stop offset="1" stopColor="#fdb813" /></linearGradient>
          </defs>
          <path d="M0 1.500A1.500 1.500 0 0 1 1.500 0H10l3 3.500h15.500A1.500 1.500 0 0 1 30 5v4H0z" fill="#dd9a0e" />
          <path d="M0 7h10l3-2.500h17V25.500a1.500 1.500 0 0 1-1.500 1.500h-27A1.500 1.500 0 0 1 0 25.500z" fill="url(#fd)" />
          <path d="M5 27v-5a2 2 0 0 1 2-2h16a2 2 0 0 1 2 2v5z" fill="#0f76cd" />
          <path d="M8.500 23.500h13" stroke="#0a4d96" strokeWidth="1.2" />
        </svg>
      </Cell>
      <Cell>
        <svg viewBox="0 0 30 30" className="size-[30px]">
          <defs>
            <linearGradient id="eg" x1="0" y1="0" x2="1" y2=".3"><stop stopColor="#1c9be0" /><stop offset=".5" stopColor="#32c0c8" /><stop offset="1" stopColor="#69e24a" /></linearGradient>
            <linearGradient id="eb" x1="0" y1="0" x2="0" y2="1"><stop stopColor="#1b9de6" /><stop offset="1" stopColor="#0b66c3" /></linearGradient>
          </defs>
          <path d="M.300 13C1.400 5.500 7.500 0 15 0c8.300 0 15 6 15 13 0 4.500-3.500 7.500-7.500 7.500-3.200 0-5-1.200-5-2.200 0-.800 1.500-1.500 1.500-3.800C19 11 15.500 7.500 10.500 7.500 5.500 7.500 2 10 .300 13z" fill="url(#eg)" />
          <path d="M.100 14C1 10 5.500 7.500 10 7.500c4.500 0 7.500 2.300 8.500 4.800-6-2-9 2-8.500 6.500.500 6 5.500 10.500 11.500 9.500C19.500 29.500 17.300 30 15 30 6.500 30 0 23 0 15z" fill="url(#eb)" />
          <path d="M10.500 15c-1.300 6 3.500 10.500 9.500 10.500 3.500 0 6-1.300 7.400-2 .500-.200.800.300.500.700-2 3-5.400 4.800-8.400 4.800-6 0-11-4.800-11-9.800 0-1.700.700-3.200 2-4.200z" fill="#0c59a4" />
        </svg>
      </Cell>
      <Cell>
        <svg viewBox="0 0 29 30" className="h-[30px] w-[29px]">
          <defs>
            <linearGradient id="st" x1="0" y1="0" x2="1" y2="1"><stop stopColor="#0669b8" /><stop offset="1" stopColor="#253a62" /></linearGradient>
          </defs>
          <path d="M8 7V2.500A1.500 1.500 0 0 1 9.500 1h10A1.500 1.500 0 0 1 21 2.500V7" fill="none" stroke="#22b8ec" strokeWidth="2" />
          <path d="M0 5h29v21a4 4 0 0 1-4 4H4a4 4 0 0 1-4-4z" fill="url(#st)" />
          <path fill="#f25022" d="M9 12h5v5H9z" /><path fill="#7fba00" d="M15 12h5v5h-5z" />
          <path fill="#00a4ef" d="M9 18h5v5H9z" /><path fill="#ffb900" d="M15 18h5v5h-5z" />
        </svg>
      </Cell>
      <Cell><Chrome className="size-[30px]" /></Cell>
      <Cell>
        <svg viewBox="0 0 29 28" className="h-[28px] w-[29px]">
          <path d="M7 1a1 1 0 0 1 1-1h20a1 1 0 0 1 1 1v6H7z" fill="#41a5ee" />
          <path d="M7 7h22v7H7z" fill="#2b7cd3" /><path d="M7 14h22v7H7z" fill="#185abd" />
          <path d="M7 21h22v6a1 1 0 0 1-1 1H8a1 1 0 0 1-1-1z" fill="#103f91" />
          <rect y="6" width="16" height="16" rx="1.5" fill="#185abd" />
          <text x="8" y="18" textAnchor="middle" fontSize="11.5" fontWeight="700" fontFamily="Open Sans" fill="#fff">W</text>
        </svg>
      </Cell>
      <Cell>
        <svg viewBox="0 0 100 100" className="size-[30px]">
          <path d="M72 28 13 75q-4 2-7-1l-5-5q-2-3 1-6L70 2l8 10z" fill="#0a74bd" />
          <path d="M72 72 13 25q-4-2-7 1l-5 5q-2 3 1 6l68 61 8-10z" fill="#1186cd" />
          <path d="M72 1q3-2 6 0l19 9q3 2 3 5v70q0 3-3 5l-19 9q-3 2-6 0 3-1 3-5V6q0-4-3-5z" fill="#2ba3f0" />
        </svg>
      </Cell>
      <Cell>
        <svg viewBox="0 0 30 30" className="size-[30px]">
          <circle cx="15" cy="15" r="15" fill="#ff6c37" />
          <circle cx="22" cy="7.5" r="2.6" fill="#fff" />
          <path d="m20 10.500-8.500 7.500M19 10l2.500 2.500-6 6-3.500.500-5 4.500" stroke="#fff" strokeWidth="1.8" fill="none" />
        </svg>
      </Cell>
      <Cell>
        <svg viewBox="0 0 28 28" className="size-[28px]">
          <circle cx="14" cy="14" r="14" fill="#fdfdfd" />
          <path d="M14 4.500c5.500 6 6 13 0 18-6-5-5.500-12 0-18z" fill="#0d6b50" />
          <path d="M14 4.500c5.500 6 6 13 0 18z" fill="#04523d" />
          <path d="M14 20v4" stroke="#7d9a8c" />
        </svg>
      </Cell>
      <Cell>
        <span className="relative flex size-[48px] items-center justify-center rounded-[5px] border border-[#e2e5f0] bg-[#eff1fa]">
          <Chrome className="size-[30px]" />
          <span className="absolute right-[2px] top-[2px] flex size-[20px] items-center justify-center rounded-full bg-[#bf360c] text-[11px] text-[#f3cdbf]">L</span>
          <span className="absolute bottom-0 h-[4px] w-[20px] rounded-full bg-[#0078d7]" />
        </span>
      </Cell>
      <Cell>
        <svg viewBox="0 0 29 30" className="h-[29px] w-[29px]">
          <defs>
            <linearGradient id="pt" x1="0" y1="0" x2="0" y2="1"><stop stopColor="#5cd4fb" /><stop offset="1" stopColor="#0f7fd8" /></linearGradient>
          </defs>
          <path d="M16 1c7 0 12.500 4 12.500 10S23 28 16 28.500c-4 .500-6-1.500-5.500-4 .500-2.500-1-4-3.500-3.500C3 22 0 20 .500 14.500 1.500 6 8 1 16 1z" fill="url(#pt)" />
          <circle cx="15" cy="6.5" r="2.5" fill="#fbbc1a" /><circle cx="8" cy="9.5" r="2.5" fill="#41a41e" />
          <circle cx="5" cy="15.5" r="2.5" fill="#d1531f" /><circle cx="14.5" cy="17" r="2" fill="#fff" />
          <path d="M18.500 10h7v3l-1.500 2.500h-4L18.500 13z" fill="#e9cfa6" />
          <path d="M20.500 15.500h3V28a1.500 1.500 0 0 1-3 0z" fill="#9a5a1c" />
        </svg>
        <span className="absolute bottom-0 h-[4px] w-[8px] rounded-full bg-[#7d7f87]" />
      </Cell>
    </div>
  );
}

function Taskbar() {
  return (
    <div className="flex h-[60px] items-center border-t border-[#a9abb5] bg-[linear-gradient(90deg,#d6dff0_0,#d7dfee_120px,#dcdde0_230px,#d9dde0_400px,#dbdcdd_480px,#dde0f0_600px,#dbe0f1_880px,#e2dcec_960px,#dbe0f0_1080px,#dde0f0_1450px,#d9dff1_1600px,#dae1f2_1920px)] text-[#1b1b1f]">
      <div className="relative ml-[27px] h-[42px] w-[37px]">
        <svg viewBox="0 0 34 36" className="h-[36px] w-[34px]">
          <defs>
            <linearGradient id="sun" x1="0" y1="0" x2=".3" y2="1"><stop stopColor="#f7b733" /><stop offset="1" stopColor="#f0690f" /></linearGradient>
          </defs>
          <circle cx="13" cy="20" r="13" fill="url(#sun)" />
          <path d="M15 29a4 4 0 0 1 0-8 5.500 5.500 0 0 1 10-1 4.300 4.300 0 1 1 .500 9z" fill="#9fc0f4" />
        </svg>
        <span className="absolute left-[12px] -top-[3px] flex size-[20px] items-center justify-center rounded-full bg-[#c42b1c] text-[13px] text-white">4</span>
      </div>
      <div className="flex flex-col items-start pb-[2px] text-[14px] leading-[20px]">
        <Fit w={30}>14°C</Fit>
        <Fit w={117} className="text-[#53545a]">Mayorm. soleado</Fit>
      </div>
      <div className="ml-[394px]"><TaskIcons /></div>
      <div className="ml-auto flex items-center">
        <Chevron className="h-[8px] w-[14px] rotate-180 [stroke-width:2]" />
        <svg viewBox="0 0 22 22" className="ml-[23px] size-[21px]" fill="none" stroke="currentColor" strokeWidth="1.5">
          <path d="M1 10.500A9.500 9.500 0 0 1 19.500 6M20.500 1v6h-6M13 20.500A10 10 0 0 1 3 15.500M1.500 21v-6h6" />
          <circle cx="16.5" cy="16.5" r="5.5" fill="#0078d7" stroke="none" />
        </svg>
        <Mic className="ml-[22px] h-[21px] w-[17px] text-[#1a56a6]" />
        <div className="ml-[25px] flex w-[28px] flex-col items-center text-[14px] leading-[20px]">
          <Fit w={24}>ESP</Fit>
          <Fit w={27}>LAA</Fit>
        </div>
        <svg viewBox="0 0 22 16" className="ml-[22px] h-[16px] w-[21px]" fill="none" stroke="currentColor" strokeWidth="1.4">
          <path d="M1 5.500a14 14 0 0 1 20 0M4 8.500a10 10 0 0 1 14 0M7 11.500a5.700 5.700 0 0 1 8 0" />
          <circle cx="11" cy="14" r="1.8" fill="currentColor" stroke="none" />
        </svg>
        <svg viewBox="0 0 21 18" className="ml-[10px] h-[17px] w-[21px]" fill="none" stroke="currentColor" strokeWidth="1.2">
          <path d="M1 6v6h3l5 4.500v-15L4 6zM12 6.500q1.500 2.500 0 5M14.800 4q3.500 5 0 10M17.500 1.500q4.500 7.500 0 15" />
        </svg>
        <svg viewBox="0 0 20 13" className="ml-[9px] h-[13px] w-[20px]">
          <rect x=".7" y=".7" width="16" height="11.6" rx="2.5" fill="none" stroke="currentColor" strokeWidth="1.2" />
          <rect x="2.8" y="2.8" width="11.8" height="7.4" rx="1" fill="currentColor" />
          <path d="M17.500 4.500h1a1 1 0 0 1 1 1v2a1 1 0 0 1-1 1h-1z" fill="currentColor" />
        </svg>
        <div className="ml-[20px] flex w-[78px] flex-col items-end pb-[2px] text-[14px] leading-[20px]">
          <Fit w={64}>9:24 a. m.</Fit>
          <Fit w={77}>13/12/2024</Fit>
        </div>
        <svg viewBox="0 0 18 20" className="ml-[11px] mr-[26px] h-[20px] w-[17px]" fill="#0b3f8f">
          <path d="M9 0a6.500 6.500 0 0 1 6.500 6.500V12L17.500 16H.500l2-4V6.500A6.500 6.500 0 0 1 9 0zM6 17.300h6a3 3 0 0 1-6 0z" />
        </svg>
      </div>
    </div>
  );
}

export default function App() {
  return (
    <div className="flex h-[1080px] w-[1920px] flex-col overflow-hidden bg-[#f5f5f5] font-['Open_Sans','Noto_Sans',sans-serif]">
      <TabStrip />
      <AddressBar />
      <NotifyBar />
      <MeetingBar />
      <div className="flex h-[790px] shrink-0">
        <div className="flex w-[1215px] flex-col items-start">
          <Slide />
          <div className="ml-[15px] mt-[10px] flex h-[30px] w-[331px] items-center rounded-[5px] bg-[#7a7a7a] pl-[7px] text-[14px] text-white">
            <Fit w={317}>CLAUDIA MILENA VELASQUEZ RUIZ (DOCENTE)</Fit>
          </div>
        </div>
        <Gallery />
        <ChatPanel />
      </div>
      <Taskbar />
    </div>
  );
}
